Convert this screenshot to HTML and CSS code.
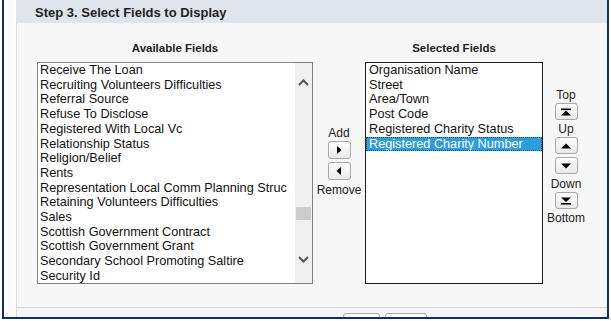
FILE: index.html
```html
<!DOCTYPE html>
<html lang="en">
<head>
    <meta charset="UTF-8">
    <meta name="viewport" content="width=device-width, initial-scale=1.0">
    <title>Select Fields</title>
    <link rel="stylesheet" href="styles.css">
</head>
<body>
    <div class="frame">
        <div class="panel">
            <div class="head">Step 3. Select Fields to Display</div>
            <div class="body">
                <div class="col col-avail">
                    <div class="col-title">Available Fields</div>
                    <div class="listbox listbox-avail">
                        <ul class="opts">
                            <li>Receive The Loan</li>
                            <li>Recruiting Volunteers Difficulties</li>
                            <li>Referral Source</li>
                            <li>Refuse To Disclose</li>
                            <li>Registered With Local Vc</li>
                            <li>Relationship Status</li>
                            <li>Religion/Belief</li>
                            <li>Rents</li>
                            <li>Representation Local Comm Planning Struc</li>
                            <li>Retaining Volunteers Difficulties</li>
                            <li>Sales</li>
                            <li>Scottish Government Contract</li>
                            <li>Scottish Government Grant</li>
                            <li>Secondary School Promoting Saltire</li>
                            <li>Security Id</li>
                        </ul>
                        <div class="scroll">
                            <svg class="arr arr-up" width="11" height="7" viewBox="0 0 11 7"><polyline points="1,6 5.5,1.5 10,6" fill="none" stroke="#555" stroke-width="2"/></svg>
                            <div class="track"><div class="thumb"></div></div>
                            <svg class="arr arr-dn" width="11" height="7" viewBox="0 0 11 7"><polyline points="1,1 5.5,5.5 10,1" fill="none" stroke="#555" stroke-width="2"/></svg>
                        </div>
                    </div>
                </div>

                <div class="col col-move">
                    <span class="lbl">Add</span>
                    <button class="btn"><svg width="10" height="10" viewBox="0 0 10 10"><polygon points="3,1 7.5,5 3,9" fill="#000"/></svg></button>
                    <button class="btn btn-gap"><svg width="10" height="10" viewBox="0 0 10 10"><polygon points="7,1 2.5,5 7,9" fill="#000"/></svg></button>
                    <span class="lbl">Remove</span>
                </div>

                <div class="col col-sel">
                    <div class="col-title">Selected Fields</div>
                    <div class="listbox listbox-sel">
                        <ul class="opts">
                            <li>Organisation Name</li>
                            <li>Street</li>
                            <li>Area/Town</li>
                            <li>Post Code</li>
                            <li>Registered Charity Status</li>
                            <li class="on">Registered Charity Number</li>
                        </ul>
                    </div>
                </div>

                <div class="col col-order">
                    <span class="lbl">Top</span>
                    <button class="btn"><svg width="12" height="10" viewBox="0 0 12 10"><rect x="1" y="1.5" width="10" height="1.6" fill="#000"/><polygon points="1,8.5 6,3.5 11,8.5" fill="#000"/></svg></button>
                    <span class="lbl">Up</span>
                    <button class="btn"><svg width="12" height="10" viewBox="0 0 12 10"><polygon points="1,7.5 6,2.5 11,7.5" fill="#000"/></svg></button>
                    <button class="btn btn-gap"><svg width="12" height="10" viewBox="0 0 12 10"><polygon points="1,2.5 6,7.5 11,2.5" fill="#000"/></svg></button>
                    <span class="lbl">Down</span>
                    <button class="btn"><svg width="12" height="10" viewBox="0 0 12 10"><polygon points="1,1.5 6,6 11,1.5" fill="#000"/><rect x="1" y="7" width="10" height="1.6" fill="#000"/></svg></button>
                    <span class="lbl">Bottom</span>
                </div>
            </div>
            <div class="foot">
                <span class="fbtn"></span>
                <span class="fbtn fbtn-wide"></span>
            </div>
        </div>
    </div>
</body>
</html>
```

FILE: styles.css
```css
body{
    margin: 0;
    background-color: #fff;
    font-family: "Liberation Sans", Arial, sans-serif;
    color: #000;
}
.frame{
    margin-left: 2px;
    width: 607px;
    box-sizing: border-box;
    border: 2px solid #102c6a;
    border-top: none;
}
.panel{
    margin-left: 12px;
}
.head{
    height: 23px;
    box-sizing: border-box;
    padding: 2px 0 0 19px;
    line-height: 21px;
    font-size: 13px;
    font-weight: bold;
    color: #1e1e1e;
    background-color: #dfe4ed;
}
.body{
    display: flex;
    align-items: flex-start;
    padding: 18px 0 23px 20px;
    background-color: #f7f7f7;
    border-left: 1px solid #dcdcdc;
    border-bottom: 1px solid #d8d8d8;
}
.col{
    display: flex;
    flex-direction: column;
    align-items: center;
}
.col-title{
    font-size: 11.5px;
    font-weight: bold;
    line-height: 14px;
    color: #222;
    margin-bottom: 7px;
}
.col-avail{ width: 276px; }
.col-sel{ width: 178px; }
.col-move{
    width: 52px;
    padding-top: 85px;
}
.col-order{
    width: 46px;
    padding-top: 47px;
}
.listbox{
    height: 222px;
    width: 100%;
    box-sizing: border-box;
    background-color: #fff;
    display: flex;
    overflow: hidden;
}
.listbox-avail{ border: 1px solid #828282; }
.listbox-sel{ border: 1px solid #1e1e1e; }
.opts{
    list-style: none;
    margin: 0;
    padding: 0;
    flex: 1;
    font-size: 12.7px;
    line-height: 14.7px;
    color: #111;
}
.opts li{
    padding-left: 2px;
    white-space: nowrap;
}
.listbox-sel .opts li{ padding-left: 3px; }
.opts li.on{
    background-color: #2e9cdc;
    color: #fff;
    outline: 1px dotted #16527c;
    outline-offset: -1px;
}
.scroll{
    width: 17px;
    background-color: #f0f0f0;
    display: flex;
    flex-direction: column;
    align-items: center;
}
.arr{ display: block; flex: none; }
.arr-up{ margin-top: 16px; }
.arr-dn{ margin-bottom: 20px; }
.track{
    flex: 1;
    width: 100%;
    position: relative;
}
.thumb{
    position: absolute;
    top: 121px;
    left: 1px;
    width: 15px;
    height: 13px;
    background-color: #cdcdcd;
}
.lbl{
    font-size: 12px;
    line-height: 14px;
    color: #222;
}
.btn{
    width: 23px;
    height: 18px;
    padding: 0;
    margin: 1px 0 2px;
    border: 1px solid #a8a8a8;
    border-radius: 3px;
    background: linear-gradient(#fefefe, #e9e9e9);
    display: flex;
    align-items: center;
    justify-content: center;
}
.btn-gap{ margin-top: 1px; margin-bottom: 3px; }
.btn svg{ display: block; }
.col-order .btn{ height: 17px; }
.foot{
    height: 9px;
    overflow: hidden;
    box-sizing: border-box;
    padding: 5px 0 0 326px;
    display: flex;
    gap: 5px;
    background-color: #f5f5f5;
    border-left: 1px solid #dcdcdc;
}
.fbtn{
    display: block;
    width: 37px;
    height: 16px;
    flex: none;
    box-sizing: border-box;
    border: 1px solid #ababab;
    border-radius: 3px;
    background-color: #fbfbfb;
}
.fbtn-wide{ width: 42px; }
```
